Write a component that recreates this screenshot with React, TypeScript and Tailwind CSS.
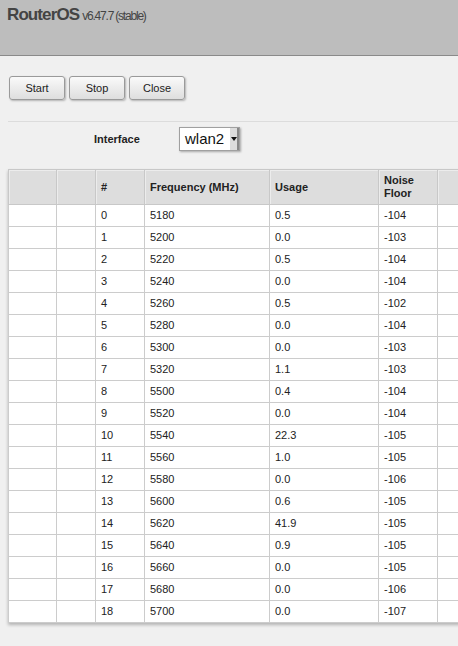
import React from 'react';

const rows: [number, number, string, number][] = [
  [0, 5180, '0.5', -104],
  [1, 5200, '0.0', -103],
  [2, 5220, '0.5', -104],
  [3, 5240, '0.0', -104],
  [4, 5260, '0.5', -102],
  [5, 5280, '0.0', -104],
  [6, 5300, '0.0', -103],
  [7, 5320, '1.1', -103],
  [8, 5500, '0.4', -104],
  [9, 5520, '0.0', -104],
  [10, 5540, '22.3', -105],
  [11, 5560, '1.0', -105],
  [12, 5580, '0.0', -106],
  [13, 5600, '0.6', -105],
  [14, 5620, '41.9', -105],
  [15, 5640, '0.9', -105],
  [16, 5660, '0.0', -105],
  [17, 5680, '0.0', -106],
  [18, 5700, '0.0', -107],
];

const colWidths = ['w-[48px]', 'w-[39px]', 'w-[49px]', 'w-[125px]', 'w-[109px]', 'w-[59px]', 'w-[40px]'];

function Btn({ label, width }: { label: string; width: string }) {
  return (
    <button
      className={`${width} h-[24px] rounded-[3px] border border-[#9a9a9a] bg-gradient-to-b from-[#fafafa] to-[#dedede] text-[11px] text-[#222] shadow-[1px_1px_2px_rgba(0,0,0,0.25)]`}
    >
      {label}
    </button>
  );
}

export default function App() {
  return (
    <div className="w-[458px] h-[646px] overflow-hidden bg-[#f0f0f0] font-['Liberation_Sans',Arial,sans-serif] text-[#222]">
      {/* Header */}
      <div className="h-[56px] bg-[#bdbdbd] border-b border-[#8a8a8a] px-[7px] pt-[2px]">
        <div className="flex items-baseline text-[#444]">
          <span className="text-[17px] font-bold tracking-[-0.9px]">RouterOS</span>
          <span className="ml-[3px] text-[12px] tracking-[-1.2px]">v6.47.7 (stable)</span>
        </div>
      </div>

      {/* Body */}
      <div className="pl-[8px] pt-[20px]">
        <div className="flex gap-[4px] pl-[1px]">
          <Btn label="Start" width="w-[56px]" />
          <Btn label="Stop" width="w-[56px]" />
          <Btn label="Close" width="w-[56px]" />
        </div>

        <div className="mt-[21px] border-t border-[#dcdcdc]" />

        <div className="flex items-center h-[34px]">
          <span className="ml-[86px] w-[85px] text-[11px] font-bold">Interface</span>
          <div className="flex h-[24px] w-[61px] items-stretch border border-[#a0a0a0] bg-white shadow-[1px_1px_2px_rgba(0,0,0,0.3)]">
            <span className="flex-1 pl-[5px] text-[15px] leading-[22px] text-[#111]">wlan2</span>
            <span className="flex w-[9px] items-center justify-center bg-[#dcdcdc] border-r-2 border-[#888]">
              <svg width="6" height="4" viewBox="0 0 6 4">
                <path d="M0 0 L6 0 L3 4 Z" fill="#111" />
              </svg>
            </span>
          </div>
        </div>

        <div className="mt-[13px] w-[470px] shadow-[0_2px_3px_rgba(0,0,0,0.25)]">
          <table className="border-collapse table-fixed w-[470px] text-[11px]">
            <thead>
              <tr className="h-[35px]">
                {['', '', '#', 'Frequency (MHz)', 'Usage', 'Noise Floor', ''].map((h, i) => (
                  <th
                    key={i}
                    className={`${colWidths[i]} border border-[#c8c8c8] bg-[#dddddd] shadow-[inset_1px_1px_0_#ececec] px-[5px] text-left align-middle font-bold leading-[13px] text-[#222]`}
                  >
                    {h === 'Noise Floor' ? (
                      <>
                        Noise
                        <br />
                        Floor
                      </>
                    ) : (
                      h
                    )}
                  </th>
                ))}
              </tr>
            </thead>
            <tbody>
              {rows.map((r) => (
                <tr key={r[0]} className="h-[22px] bg-white">
                  <td className="border border-[#cccccc]" />
                  <td className="border border-[#cccccc]" />
                  <td className="border border-[#cccccc] px-[5px]">{r[0]}</td>
                  <td className="border border-[#cccccc] px-[5px]">{r[1]}</td>
                  <td className="border border-[#cccccc] px-[5px]">{r[2]}</td>
                  <td className="border border-[#cccccc] px-[5px]">{r[3]}</td>
                  <td className="border border-[#cccccc]" />
                </tr>
              ))}
            </tbody>
          </table>
        </div>
      </div>
    </div>
  );
}
